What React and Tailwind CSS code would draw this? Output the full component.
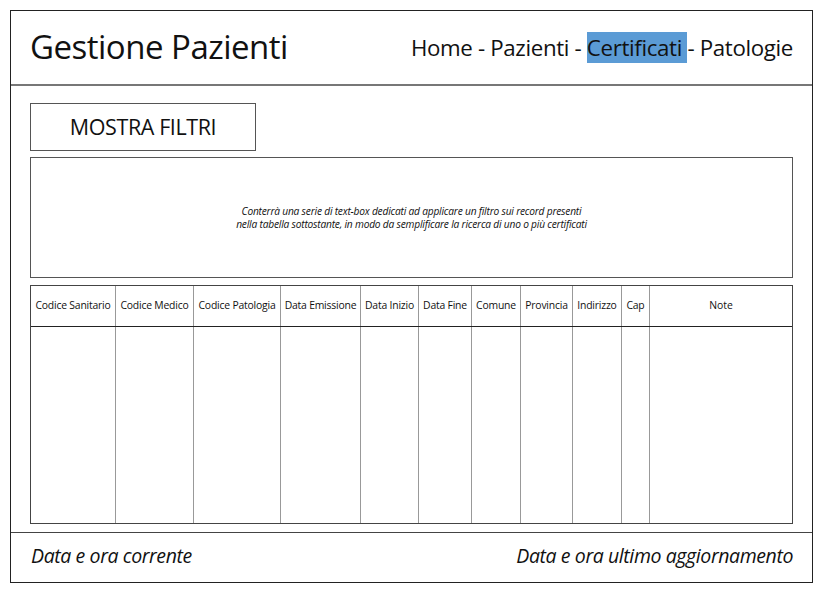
export default function App() {
  const cols = [
    ["Codice Sanitario", "w-[85px]"],
    ["Codice Medico", "w-[78px]"],
    ["Codice Patologia", "w-[87px]"],
    ["Data Emissione", "w-[80px]"],
    ["Data Inizio", "w-[58px]"],
    ["Data Fine", "w-[53px]"],
    ["Comune", "w-[49px]"],
    ["Provincia", "w-[52px]"],
    ["Indirizzo", "w-[49px]"],
    ["Cap", "w-[28px]"],
  ];
  return (
    <div className="w-[824px] h-[590px] bg-white pt-[10px] pl-[10px] font-['Open_Sans',sans-serif] text-[#111]">
      <div className="w-[803px] h-[573px] border border-[#222] flex flex-col">
        <header className="h-[75px] shrink-0 border-b-2 border-[#777] flex items-center justify-between pl-[19px] pr-[19px]">
          <h1 className="text-[33px] leading-none tracking-[-0.5px] mt-[-3px]">Gestione Pazienti</h1>
          <nav className="text-[22.3px] leading-none tracking-[-0.35px] mt-[1px] whitespace-pre">
            Home - Pazienti - <span className="bg-[#5b9bd5]">Certificati </span>- Patologie
          </nav>
        </header>
        <main className="flex-1 flex flex-col pl-[19px] pr-[19px] pt-[17px]">
          <button className="w-[226px] h-[48px] border border-[#555] text-[21.5px] tracking-[-0.4px] flex items-center justify-center">
            MOSTRA FILTRI
          </button>
          <div className="mt-[6px] h-[121px] border border-[#555] flex items-center justify-center text-center italic text-[10.2px] leading-[13px] tracking-[-0.2px]">
            <p>
              Conterrà una serie di text-box dedicati ad applicare un filtro sui record presenti
              <br />
              nella tabella sottostante, in modo da semplificare la ricerca di uno o più certificati
            </p>
          </div>
          <div className="mt-[7px] h-[239px] border border-[#444] flex flex-col">
            <div className="h-[41px] border-b border-[#222] flex">
              {cols.map(([t, w]) => (
                <div key={t} className={`${w} shrink-0 border-r border-[#999] flex items-center justify-center text-[10.4px] tracking-[-0.2px] whitespace-nowrap`}>
                  {t}
                </div>
              ))}
              <div className="flex-1 flex items-center justify-center text-[10.4px]">Note</div>
            </div>
            <div className="flex-1 flex">
              {cols.map(([t, w]) => (
                <div key={t} className={`${w} shrink-0 border-r border-[#999]`} />
              ))}
              <div className="flex-1" />
            </div>
          </div>
        </main>
        <footer className="h-[50px] shrink-0 border-t border-[#444] flex items-center justify-between pl-[20px] pr-[19px] pb-[3px] italic text-[19.5px] tracking-[-0.4px]">
          <span>Data e ora corrente</span>
          <span>Data e ora ultimo aggiornamento</span>
        </footer>
      </div>
    </div>
  );
}
